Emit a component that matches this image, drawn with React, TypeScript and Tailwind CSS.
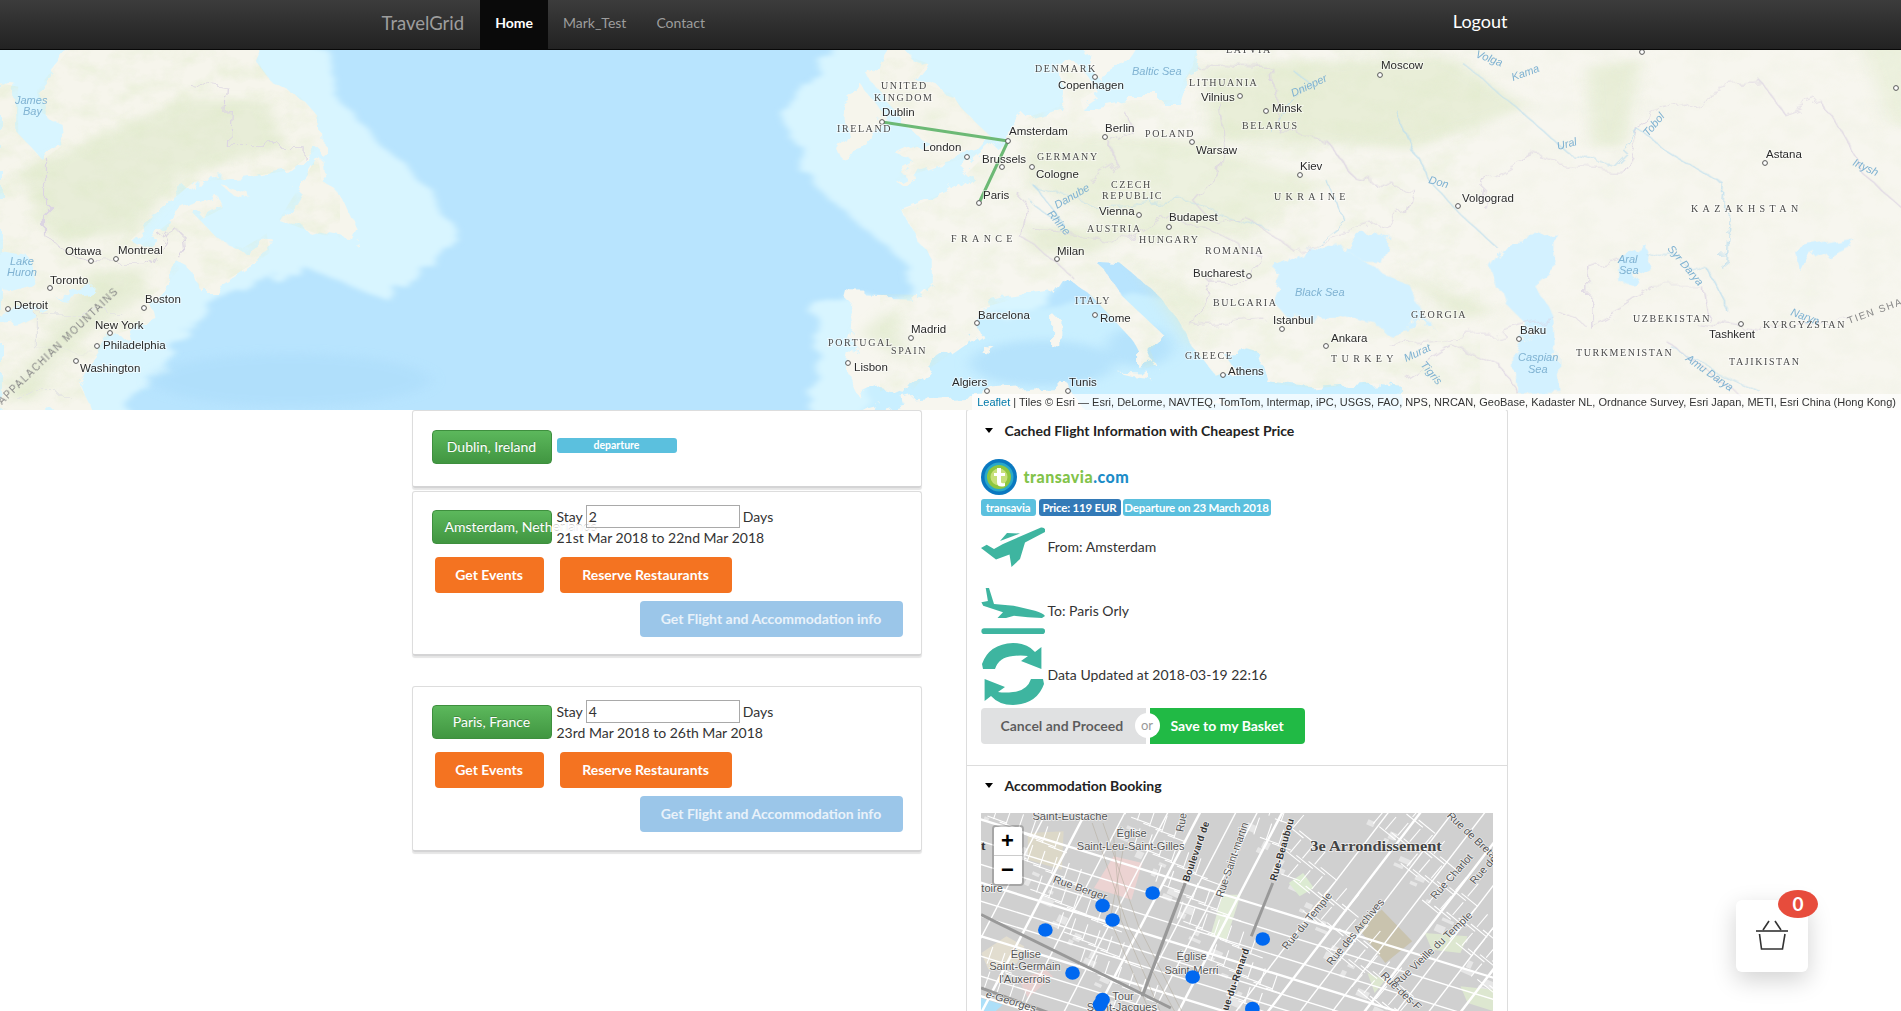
import type { ReactNode } from "react";

type Kind = "city" | "country" | "wide" | "water" | "range";
type Label = [string, number, number, Kind, number?];

const labels: Label[] = [
  ["Ottawa", 65, 255, "city"], ["Montreal", 118, 254, "city"], ["Toronto", 50, 284, "city"], ["Detroit", 14, 309, "city"],
  ["Boston", 145, 303, "city"], ["New York", 95, 329, "city"], ["Philadelphia", 103, 349, "city"], ["Washington", 80, 372, "city"],
  ["James", 15, 104, "water"], ["Bay", 23, 115, "water"], ["Lake", 10, 265, "water"], ["Huron", 7, 276, "water"],
  ["APPALACHIAN MOUNTAINS", 2, 405, "range", -44],
  ["UNITED", 881, 89, "country"], ["KINGDOM", 874, 101, "country"], ["Dublin", 882, 116, "city"], ["IRELAND", 837, 132, "country"],
  ["London", 923, 151, "city"], ["PORTUGAL", 828, 346, "country"], ["SPAIN", 891, 354, "country"], ["Madrid", 911, 333, "city"], ["Lisbon", 854, 371, "city"],
  ["LATVIA", 1226, 53, "country"], ["DENMARK", 1035, 72, "country"], ["Copenhagen", 1058, 89, "city"], ["Baltic Sea", 1132, 75, "water"],
  ["LITHUANIA", 1189, 86, "country"], ["Vilnius", 1201, 101, "city"], ["Minsk", 1272, 112, "city"], ["Dnieper", 1293, 97, "water", -25],
  ["Moscow", 1381, 69, "city"], ["Volga", 1475, 57, "water", 20], ["Kama", 1513, 81, "water", -20], ["Amsterdam", 1009, 135, "city"],
  ["Berlin", 1105, 132, "city"], ["POLAND", 1145, 137, "country"], ["BELARUS", 1242, 129, "country"], ["Warsaw", 1196, 154, "city"],
  ["Brussels", 982, 163, "city"], ["GERMANY", 1037, 160, "country"], ["Cologne", 1036, 178, "city"], ["Kiev", 1300, 170, "city"],
  ["CZECH", 1111, 188, "country"], ["REPUBLIC", 1102, 199, "country"], ["Paris", 983, 199, "city"], ["UKRAINE", 1274, 200, "wide"],
  ["Vienna", 1099, 215, "city"], ["Budapest", 1169, 221, "city"], ["Danube", 1057, 209, "water", -30], ["Rhine", 1047, 214, "water", 50],
  ["AUSTRIA", 1087, 232, "country"], ["HUNGARY", 1139, 243, "country"], ["FRANCE", 951, 242, "wide"], ["Milan", 1057, 255, "city"],
  ["ROMANIA", 1205, 254, "country"], ["Volgograd", 1462, 202, "city"], ["KAZAKHSTAN", 1691, 212, "wide"], ["Astana", 1766, 158, "city"],
  ["Ural", 1558, 150, "water", -15], ["Tobol", 1648, 137, "water", -50], ["Don", 1428, 183, "water", 15], ["Irtysh", 1852, 165, "water", 25],
  ["Bucharest", 1193, 277, "city"], ["ITALY", 1075, 304, "country"], ["BULGARIA", 1213, 306, "country"], ["Black Sea", 1295, 296, "water"],
  ["Rome", 1100, 322, "city"], ["Barcelona", 978, 319, "city"], ["GEORGIA", 1411, 318, "country"], ["Istanbul", 1273, 324, "city"],
  ["Baku", 1520, 334, "city"], ["UZBEKISTAN", 1633, 322, "country"], ["Tashkent", 1709, 338, "city"], ["KYRGYZSTAN", 1763, 328, "country"],
  ["Ankara", 1331, 342, "city"], ["TURKEY", 1331, 362, "wide"], ["TURKMENISTAN", 1576, 356, "country"], ["TAJIKISTAN", 1729, 365, "country"],
  ["Caspian", 1518, 361, "water"], ["Sea", 1528, 373, "water"], ["GREECE", 1185, 359, "country"], ["Athens", 1228, 375, "city"],
  ["Algiers", 952, 386, "city"], ["Tunis", 1069, 386, "city"], ["Tigris", 1420, 365, "water", 50], ["Murat", 1406, 362, "water", -25],
  ["Aral", 1618, 263, "water"], ["Sea", 1619, 274, "water"], ["Syr Darya", 1667, 249, "water", 50], ["Amu Darya", 1685, 360, "water", 35],
  ["Naryn", 1790, 315, "water", 20], ["TIEN SHAN", 1849, 324, "range", -20],
];

const cities = [
  [91, 261], [116, 259], [50, 288], [8, 309], [144, 308], [110, 333], [97, 346], [76, 361], [882, 122], [967, 157], [911, 338], [848, 363],
  [1095, 77], [1240, 96], [1266, 111], [1380, 75], [1642, 52], [1896, 88], [1008, 141], [1105, 137], [1192, 142], [1002, 167], [1032, 167],
  [1300, 175], [979, 203], [1139, 215], [1169, 227], [1057, 259], [1249, 276], [1095, 315], [977, 323], [1458, 206], [1765, 163], [1282, 329],
  [1326, 346], [1519, 339], [1741, 324], [1223, 375], [987, 391], [1068, 391],
];

const labelClass: Record<Kind, string> = {
  city: "fill-[#2a2a2a] text-[11.5px] [font-family:'Liberation_Sans',sans-serif] [paint-order:stroke] stroke-white/50 stroke-[2px]",
  country: "fill-[#4a4a4a] text-[10px] tracking-[1.6px] [font-family:'Liberation_Serif',serif] [paint-order:stroke] stroke-white/50 stroke-[2px]",
  wide: "fill-[#4a4a4a] text-[10px] tracking-[4.4px] [font-family:'Liberation_Serif',serif] [paint-order:stroke] stroke-white/50 stroke-[2px]",
  water: "fill-[#7fb2d2] text-[11px] italic [font-family:'Liberation_Sans',sans-serif]",
  range: "fill-[#888] text-[10px] tracking-[1.5px] [font-family:'Liberation_Sans',sans-serif]",
};

const americaLand =
  "M135 100 L415 100 L430 200 L450 250 L495 290 L525 350 L528 440 L480 510 L400 535 L320 545 L290 590 L265 630 L240 680 L215 720 L230 740 L270 680 L300 640 L360 590 L368 625 L330 660 L350 700 L365 720 L400 745 L440 700 L445 760 L400 810 L350 870 L330 870 L320 820 L300 800 L270 860 L240 900 L260 960 L220 985 L180 1010 L165 1050 L150 1090 L130 1150 L155 1240 L0 1240 L0 250 L30 260 L30 400 L70 480 L100 440 L95 360 L70 340 L60 270 Z";
const newfoundland = "M525 465 L500 540 L480 600 L460 660 L490 680 L520 700 L575 720 L585 680 L560 580 L530 540Z";
const ireland = "M1385 320 L1425 260 L1450 320 L1460 345 L1455 400 L1430 450 L1385 470 L1378 440 L1395 390 L1385 350Z";
const britain = "M1465 147 L1530 190 L1510 240 L1568 280 L1600 350 L1640 420 L1620 460 L1560 490 L1480 540 L1470 530 L1510 490 L1480 465 L1530 420 L1490 380 L1480 340 L1460 300 L1440 240 L1450 190Z";
const eurasia =
  "M410 100 L1700 100 L1700 1300 L745 1300 L745 1160 L700 1150 L600 1165 L525 1150 L510 1060 L480 1045 L445 1050 L470 1110 L440 1130 L410 1060 L385 980 L340 880 L280 790 L240 785 L255 810 L285 890 L355 1010 L330 1050 L340 1095 L315 1110 L315 1060 L290 1000 L240 900 L190 825 L170 880 L100 900 L50 925 L40 960 L50 1000 L-30 1100 L-70 1190 L-110 1170 L-145 1200 L-170 1100 L-155 1000 L-165 915 L-160 880 L-50 885 L-30 850 L-30 780 L-80 630 L-48 610 L0 570 L50 480 L95 410 L130 350 L180 320 L190 260 L180 200 L215 200 L240 270 L215 300 L220 330 L300 300 L375 300 L385 240 L400 200Z";

function WorldMap() {
  return (
    <svg className="block h-full w-full" viewBox="0 50 1901 360" preserveAspectRatio="none">
      <defs>
        <filter id="soft" x="-20%" y="-20%" width="140%" height="140%">
          <feGaussianBlur stdDeviation="12" />
        </filter>
        <filter id="softer" x="-10%" y="-10%" width="120%" height="120%">
          <feTurbulence type="fractalNoise" baseFrequency="0.02" numOctaves="3" seed="4" result="n" />
          <feDisplacementMap in="SourceGraphic" in2="n" scale="55" result="d" />
          <feGaussianBlur in="d" stdDeviation="6" />
        </filter>
        <filter id="rough" x="-5%" y="-5%" width="110%" height="110%">
          <feTurbulence type="fractalNoise" baseFrequency="0.035" numOctaves="4" seed="7" result="n" />
          <feDisplacementMap in="SourceGraphic" in2="n" scale="26" />
        </filter>
        <filter id="mottle" x="0" y="0" width="100%" height="100%">
          <feTurbulence type="fractalNoise" baseFrequency="0.035 0.05" numOctaves="4" seed="11" />
          <feColorMatrix values="0 0 0 0 0.72  0 0 0 0 0.82  0 0 0 0 0.56  1.6 0 0 0 -0.62" />
        </filter>
        <clipPath id="landClip">
          <path d={americaLand} transform="scale(0.6062 0.3333)" />
          <path d={newfoundland} transform="scale(0.6062 0.3333)" />
          <path d={eurasia} transform="translate(950 0) scale(0.6065 0.3333)" />
          <path d={britain} transform="scale(0.6062 0.3333)" />
          <path d={ireland} transform="scale(0.6062 0.3333)" />
        </clipPath>
      </defs>
      <rect x="0" y="50" width="1901" height="360" fill="#b8e4fe" />
      {/* shelf seas, drawn in crop coordinates */}
      <g transform="scale(0.6062 0.3333)" fill="#d8f5ff" filter="url(#softer)">
        <path d="M430 100 L540 147 L560 300 L700 560 L760 700 L640 900 L500 800 L350 900 L200 1260 L-20 1260 L-20 100Z" />
        <path d="M1400 100 L1290 340 L1340 550 L1500 800 L1500 880 L1350 900 L1340 1260 L1600 1260 L1760 800 L1800 500 L1800 100Z" />
        <path d="M1750 100 L2000 100 L2000 500 L1750 500Z" />
        <path d="M1420 1000 L2350 780 L2350 1260 L1420 1260Z" fill="#c9efff" />
      </g>
      <g transform="scale(0.6062 0.3333)" fill="#aedefb" filter="url(#soft)" opacity="0.7">
        <ellipse cx="480" cy="1140" rx="230" ry="80" />
        <ellipse cx="1720" cy="1090" rx="120" ry="70" />
        <ellipse cx="1880" cy="1040" rx="55" ry="60" />
      </g>
      <g filter="url(#rough)">
        <g transform="scale(0.6062 0.3333)" fill="#f6f5ec">
          <path d={americaLand} />
          <path d={newfoundland} />
          <path d="M365 555 L410 580 L412 598 L385 585Z" />
          <path d={ireland} />
          <path d={britain} />
        </g>
        <g transform="translate(950 0) scale(0.6065 0.3333)" fill="#f7f6ef">
          <path d={eurasia} />
          <path d="M240 100 L320 100 L300 160 L280 210 L245 235 L225 190Z" />
          <path d="M-200 1300 L-130 1230 L-60 1195 L60 1180 L200 1160 L210 1200 L240 1300Z" />
          <path d="M165 950 L182 955 L182 1040 L165 1035Z M275 1115 L328 1118 L328 1132 L298 1125Z M420 1207 L500 1212 L495 1220 L420 1214Z M55 1040 L75 1045 L65 1056 L50 1052Z" />
        </g>
      </g>
      <g transform="scale(0.6062 0.3333)" fill="#dde8c8" filter="url(#soft)" opacity="0.55">
        <path d="M30 520 L300 300 L440 300 L470 440 L300 520 L220 700 L90 720Z" />
        <path d="M150 820 L240 800 L230 900 L100 1050 L60 1200 L10 1200Z" />
        <path d="M1420 1000 L1470 920 L1500 1100Z" />
      </g>
      <g transform="translate(950 0) scale(0.6065 0.3333)" fill="#dfe9c9" filter="url(#soft)" opacity="0.6">
        <path d="M420 200 L820 170 L950 320 L760 450 L630 430 L430 420Z" />
        <path d="M1050 200 L1140 180 L1110 440 L1060 440Z" />
        <path d="M130 400 L420 420 L600 550 L510 700 L330 720 L120 540Z" opacity="0.7" />
        <path d="M130 680 L300 690 L240 760 L130 760Z" />
        <path d="M720 800 L900 930 L850 960Z" />
        <path d="M1500 130 L1700 120 L1700 350 L1550 380Z" opacity="0.7" />
        <path d="M300 780 L430 900 L400 1050Z" opacity="0.7" />
      </g>
      <g clipPath="url(#landClip)">
        <rect x="0" y="50" width="340" height="360" filter="url(#mottle)" opacity="0.5" />
        <rect x="880" y="50" width="600" height="360" filter="url(#mottle)" opacity="0.4" />
        <rect x="1480" y="50" width="421" height="360" filter="url(#mottle)" opacity="0.15" />
      </g>
      <g filter="url(#rough)">
        <g transform="scale(0.6062 0.3333)">
          <path fill="#d9f5ff" d="M0 750 L45 765 L60 860 L20 880 L0 860Z" />
          <path fill="#d9f5ff" d="M85 880 L150 850 L145 880 L100 890Z" />
          <path fill="#d9f5ff" d="M0 950 L80 925 L30 970 L0 975Z" />
          <g fill="none" stroke="#dcd5e2" strokeWidth="2">
            <path d="M80 480 V720 L150 790 L240 795 L270 690 L300 700 L305 790" />
            <path d="M310 250 L380 270 L375 440 L500 440 L500 470" />
            <path d="M60 940 H200 M60 940 V1050 H150 M20 1180 H110" stroke="#e4e4e4" />
          </g>
        </g>
        <g transform="translate(950 0) scale(0.6065 0.3333)">
          <g fill="#d3f1ff">
            <path d="M580 730 L650 750 L700 800 L760 860 L790 970 L720 990 L640 950 L560 960 L530 900 L550 810Z" />
            <path d="M650 750 L720 695 L705 780 L680 780Z" />
            <path d="M920 720 L1000 700 L1000 790 L960 850 L1000 960 L1005 1170 L930 1170 L930 1060 L960 990 L910 900 L890 800Z" />
            <path d="M1100 770 L1140 720 L1150 790 L1130 860 L1100 840Z" />
            <path d="M1390 750 L1490 715 L1480 740 L1400 810Z" />
          </g>
          <g fill="none" stroke="#dbd2e2" strokeWidth="2">
            <path d="M235 550 L280 500 L260 420 L290 380 L285 330 M440 300 L450 430 L440 520 L400 600 L430 660 L480 640 L560 740 L620 720 L750 640 L760 560 L660 520 L620 420 L540 390 L530 200 L400 190" />
            <path d="M140 690 L300 720 L360 650 L430 690 L520 780 L490 850 L430 850 L400 980 L520 960 M120 590 L110 700 L190 810" />
            <path d="M880 620 L890 540 L960 470 L1030 500 L1110 510 L1130 450 L1150 330 L1280 260 L1340 250 L1380 350 L1440 310 L1510 530 L1568 620" />
            <path d="M1055 980 V800 L1100 770 M1055 975 L1110 920 L1160 860 L1240 860 L1250 960 M1000 930 L1045 970 M1230 970 L1340 1000 L1480 950 M720 1030 L900 1010 L1000 960 M1190 1040 L1300 1180" />
            <path d="M750 1130 L830 1040 L910 1100 L930 1170" />
          </g>
          <g fill="none" stroke="#bcdeef" strokeWidth="2">
            <path d="M520 380 L600 260 L560 200 M620 540 L650 660 L600 730 M840 180 L920 300 L1020 460 L1090 490 L1140 400 L1280 560 L1270 800 M730 320 L760 450 L800 560 L840 640 L900 740" />
            <path d="M130 600 L190 680 L140 560 L240 620 L380 600 L520 680 M1140 750 L1250 810 L1290 950 M1200 1060 L1340 1180" />
          </g>
        </g>
      </g>
      <polyline points="882,122 1008,141 979,203" fill="none" stroke="#6cb975" strokeWidth="3" strokeLinejoin="round" />
      {cities.map(([x, y], i) => (
        <circle key={i} cx={x} cy={y} r="2.4" fill="#fff" stroke="#555" strokeWidth="1" />
      ))}
      {labels.map(([text, x, y, kind, rot], i) => (
        <text key={i} x={x} y={y} className={labelClass[kind]} transform={rot ? `rotate(${rot} ${x} ${y})` : undefined}>
          {text}
        </text>
      ))}
    </svg>
  );
}

// small side streets, spread with a fixed sequence so the picture stays the same
const alleys = Array.from({ length: 260 }, (_, i) => {
  const x = 60 + ((i * 137) % 1430);
  const y = 160 + ((i * 229) % 600);
  const steep = i % 2 === 0;
  const right = x > 900;
  const dx = steep ? (right ? 30 : 16) : right ? 46 : 52;
  const dy = steep ? (right ? -38 : -50) : right ? 40 : 20;
  return { x, y, dx, dy };
});

const roofs = Array.from({ length: 70 }, (_, i) => ({
  x: 70 + ((i * 191) % 1410),
  y: 170 + ((i * 313) % 580),
  w: 14 + (i % 4) * 7,
  h: 10 + (i % 3) * 6,
}));

function ParisMap() {
  const lineA = [150, 215, 285, 340, 395, 440, 500, 560, 620, 680, 740, 800, 865, 930, 1000];
  const lineB = [130, 240, 350, 470, 560, 660, 720, 790];
  const lineC = [900, 990, 1080, 1170, 1260, 1350, 1440, 1530, 1620, 1710];
  const dots = [[539, 400], [399, 438], [427, 481], [239, 511], [847, 538], [315, 640], [651, 652], [399, 720], [392, 735], [818, 747]];
  const text = "[font-family:'Liberation_Sans',sans-serif] text-[31px] fill-[#555] [paint-order:stroke] stroke-white/70 stroke-[4px]";
  const strong = "fill-[#333] text-[28px] font-bold tracking-[1px] [font-family:'Liberation_Sans',sans-serif] [paint-order:stroke] stroke-white/70 stroke-[4px]";
  return (
    <svg className="block h-full w-full" viewBox="59 160 1432 594" preserveAspectRatio="none">
      <rect x="59" y="160" width="1432" height="594" fill="#d0d0d0" />
      {roofs.map((r, i) => (
        <rect key={i} x={r.x} y={r.y} width={r.w} height={r.h} fill="#e6e6e6" transform={`rotate(25 ${r.x} ${r.y})`} />
      ))}
      <path d="M190 220 L290 215 L285 330 L190 300Z" fill="#dcd8c8" />
      <path d="M375 385 L430 290 L510 310 L480 420 L420 400Z" fill="#ecd3d2" />
      <path d="M700 530 L735 405 L785 405 L745 540Z" fill="#e2ecd8" />
      <path d="M920 370 L960 340 L990 385 L950 410Z" fill="#dcebd2" />
      <path d="M1110 500 L1180 450 L1265 545 L1190 610Z" fill="#c9c3ae" />
      <path d="M59 715 L120 735 L100 754 L59 754Z" fill="#addff8" />
      <path d="M165 660 L240 630 L260 650 L190 715Z" fill="#e6cfcf" />
      <path d="M60 580 L130 530 L180 560 L160 610 L80 630Z" fill="#e2ddcf" />
      <path d="M1300 520 L1420 530 L1400 580 L1320 570Z M1140 640 L1190 660 L1160 700Z M1400 680 L1491 690 L1491 754 L1420 730Z" fill="#dde7d0" />
      <g stroke="#fff" fill="none">
        {lineA.map((y0, i) => (
          <line key={i} x1="0" y1={y0 + 10} x2="1600" y2={y0 + 540} strokeWidth={i % 3 === 0 ? 7 : 4} />
        ))}
        {lineB.map((x0, i) => (
          <line key={i} x1={x0 + 140} y1="100" x2={x0 - 200} y2="800" strokeWidth={i % 3 === 1 ? 7 : 4} />
        ))}
        {lineC.map((x0, i) => (
          <line key={i} x1={x0 + 340} y1="100" x2={x0 - 160} y2="800" strokeWidth={i % 3 === 1 ? 7 : 4} />
        ))}
        {alleys.map((a, i) => (
          <line key={i} x1={a.x} y1={a.y} x2={a.x + a.dx} y2={a.y + a.dy} strokeWidth="3" />
        ))}
      </g>
      <g stroke="#b5ad9e" strokeWidth="2" fill="none" opacity="0.8">
        <path d="M370 190 L470 500 L600 754 M400 190 L500 500 L620 754 M430 230 L450 480 L560 754 M460 250 L420 480 L530 754" />
      </g>
      <g stroke="#999" fill="none">
        <path d="M59 465 L590 745" strokeWidth="9" />
        <path d="M59 685 L250 760" strokeWidth="9" />
        <path d="M630 370 L510 710" strokeWidth="9" />
        <path d="M875 370 L815 530" strokeWidth="8" />
      </g>
      <text x="203" y="182" className={text}>Saint-Eustache</text>
      <text x="438" y="232" className={text}>Église</text>
      <text x="327" y="270" className={text}>Saint-Leu-Saint-Gilles</text>
      <text x="59" y="272" className="fill-[#333] text-[38px] font-bold [font-family:'Liberation_Serif',serif]">t</text>
      <text x="60" y="398" className={text}>toire</text>
      <text x="258" y="368" transform="rotate(20 258 368)" className={text}>Rue Berger</text>
      <text x="640" y="368" transform="rotate(-72 640 368)" className={strong}>Boulevard de</text>
      <text x="625" y="218" transform="rotate(-80 625 218)" className={text}>Rue</text>
      <text x="735" y="415" transform="rotate(-72 735 415)" className={text}>Rue-Saint-martin</text>
      <text x="885" y="365" transform="rotate(-75 885 365)" className={strong}>Rue-Beaubou</text>
      <text x="980" y="274" className="fill-[#444] text-[46px] font-bold [font-family:'Liberation_Serif',serif] [paint-order:stroke] stroke-white/70 stroke-[4px]">3e Arrondissement</text>
      <text x="915" y="572" transform="rotate(-52 915 572)" className={text}>Rue du Temple</text>
      <text x="1040" y="618" transform="rotate(-52 1040 618)" className={text}>Rue des Archives</text>
      <text x="1225" y="680" transform="rotate(-45 1225 680)" className={text}>Rue Vieille du Temple</text>
      <text x="1175" y="650" transform="rotate(45 1175 650)" className={text}>Rue-des-F</text>
      <text x="1330" y="420" transform="rotate(-50 1330 420)" className={text}>Rue Charlot</text>
      <text x="1360" y="170" transform="rotate(45 1360 170)" className={text}>Rue de Bretagne</text>
      <text x="1440" y="375" transform="rotate(-50 1440 375)" className={text}>Rue de</text>
      <text x="750" y="754" transform="rotate(-72 750 754)" className={strong}>ue-du-Renard</text>
      <text x="606" y="602" className={text}>Église</text>
      <text x="572" y="644" className={text}>Saint-Merri</text>
      <text x="142" y="596" className={text}>Église</text>
      <text x="82" y="632" className={text}>Saint-Germain</text>
      <text x="110" y="670" className={text}>l'Auxerrois</text>
      <text x="426" y="722" className={text}>Tour</text>
      <text x="355" y="754" className={text}>Saint-Jacques</text>
      <text x="70" y="712" transform="rotate(18 70 712)" className={text}>e-Georges</text>
      {dots.map(([x, y], i) => (
        <circle key={i} cx={x} cy={y} r="20.5" fill="#0068f0" />
      ))}
    </svg>
  );
}

function Plane() {
  return (
    <svg className="h-16 w-16 shrink-0 fill-[#3eb5a0]" viewBox="0 0 64 64">
      <path d="M60 13.5 Q65 13 64 18 L44 28.5 L39 45 L30.5 53 L28.5 40.5 L15 45.5 L0 34 L5.7 30.7 L13 35 L22 30Z" />
      <path d="M19 27 L26 19 L39 19.5Z" />
    </svg>
  );
}

function PlaneLand() {
  return (
    <svg className="h-16 w-16 shrink-0 fill-[#3eb5a0]" viewBox="0 0 64 64">
      <path d="M4.7 10 L8 10 L13 26 L32.6 27.7 L54 32.7 Q62 35 64 38 L61 40 L47 39.3 L33 37.7 L25 40 L16.5 40 L22 34.3 L2.2 27.7 L0.4 24.3 L6.9 23Z" />
      <rect x="0.4" y="50.3" width="63.6" height="5.7" rx="2.8" />
    </svg>
  );
}

function SyncIcon() {
  const arc = "M1 22 Q8 2 32 1 Q46 1 54 10 L60.4 5 L60.4 27 L40 19 L47 14 Q40 13 32 14 Q18 15 14 27 L2 27Z";
  return (
    <svg className="h-16 w-16 shrink-0 fill-[#3eb5a0]" viewBox="0 0 64 64">
      <path d={arc} />
      <path d={arc} transform="rotate(180 32 32)" />
    </svg>
  );
}

function Caret() {
  return (
    <svg className="h-[5px] w-[8px] fill-black" viewBox="0 0 8 5">
      <path d="M0 0 H8 L4 5Z" />
    </svg>
  );
}

function CityButton({ name }: { name: string }) {
  return (
    <div className="h-[34px] w-[120px] shrink-0 whitespace-nowrap rounded-[4px] border border-[#3e8f3e] bg-gradient-to-b from-[#5cb85c] to-[#419641] px-3 text-center text-[14px] leading-[32px] text-white [text-shadow:0_-1px_0_rgba(0,0,0,0.2)]">
      {name}
    </div>
  );
}

function Stop({ name, days, dates, tall }: { name: string; days: string; dates: string; tall?: boolean }) {
  return (
    <div className={`rounded-[3px] border border-b-2 border-[#ddd] border-b-[#d4d4d5] pl-[19px] pr-[18px] pt-[18px] shadow-[0_2px_1px_rgba(0,0,0,0.1)] ${tall ? "pb-[18px]" : "pb-[17px]"}`}>
      <div className="flex items-start gap-[5px]">
        <CityButton name={name} />
        <div className="-mt-[5px] text-[14px] leading-[20px] text-[#333]">
          <div className="flex h-[23px] items-center">
            <span>Stay</span>
            <div className="ml-[3px] h-[23px] w-[154px] border border-[#a9a9a9] px-[2px] leading-[21px]">{days}</div>
            <span className="ml-[3px]">Days</span>
          </div>
          <div>{dates}</div>
        </div>
      </div>
      <div className="ml-[3px] mt-[9px] flex gap-[16px]">
        <div className="h-9 w-[109px] rounded-[4px] bg-[#f47321] text-center text-[14px] font-bold leading-9 text-white">Get Events</div>
        <div className="h-9 w-[172px] rounded-[4px] bg-[#f47321] text-center text-[14px] font-bold leading-9 text-white">Reserve Restaurants</div>
      </div>
      <div className="mt-2 flex justify-end">
        <div className="h-9 w-[263px] rounded-[4px] bg-[#9bc6e9] text-center text-[14px] font-bold leading-9 text-[#e9f2fa]">Get Flight and Accommodation info</div>
      </div>
    </div>
  );
}

function InfoRow({ icon, text }: { icon: ReactNode; text: string }) {
  return (
    <div className="flex h-16 items-center">
      {icon}
      <span className="ml-[3px] text-[14px] text-[#333]">{text}</span>
    </div>
  );
}

export default function App() {
  return (
    <div className="relative h-screen overflow-hidden bg-white [font-family:Lato,sans-serif]">
      <nav className="h-[50px] border-b border-[#080808] bg-gradient-to-b from-[#3c3c3c] to-[#222]">
        <div className="mx-auto flex h-[49px] w-[1170px] items-stretch">
          <a className="ml-[16px] mr-[16px] text-[18.5px] leading-[47px] text-[#9d9d9d]">TravelGrid</a>
          <a className="bg-[#0a0a0a] px-[15px] text-[14px] font-bold leading-[46px] text-white">Home</a>
          <a className="px-[15px] text-[14px] leading-[46px] text-[#9d9d9d]">Mark_Test</a>
          <a className="px-[15px] text-[14px] leading-[46px] text-[#9d9d9d]">Contact</a>
          <a className="ml-auto mr-[28px] text-[18px] leading-[42px] text-white">Logout</a>
        </div>
      </nav>

      <div className="relative h-[360px]">
        <WorldMap />
        <div className="absolute bottom-0 right-0 whitespace-nowrap bg-white/70 px-[5px] text-[11px] leading-[16px] text-[#333] [font-family:'Liberation_Sans',sans-serif]">
          <span className="text-[#0078a8]">Leaflet</span> | Tiles © Esri — Esri, DeLorme, NAVTEQ, TomTom, Intermap, iPC, USGS, FAO, NPS, NRCAN, GeoBase, Kadaster NL, Ordnance Survey, Esri Japan, METI, Esri China (Hong Kong)
        </div>
      </div>

      <div className="mx-auto flex w-[1170px] items-start pl-[46px]">
        <div className="w-[510px]">
          <div className="rounded-[3px] border border-b-2 border-[#ddd] border-b-[#d4d4d5] pb-[22px] pl-[19px] pt-[19px] shadow-[0_2px_1px_rgba(0,0,0,0.1)]">
            <div className="flex items-start gap-[5px]">
              <CityButton name="Dublin, Ireland" />
              <span className="mt-2 h-[15px] w-[120px] rounded-[3px] bg-[#5bc0de] text-center text-[10.5px] font-bold leading-[15px] text-white">departure</span>
            </div>
          </div>
          <div className="mt-[3px]">
            <Stop name="Amsterdam, Netherlands" days="2" dates="21st Mar 2018 to 22nd Mar 2018" />
          </div>
          <div className="mt-[30px]">
            <Stop name="Paris, France" days="4" dates="23rd Mar 2018 to 26th Mar 2018" tall />
          </div>
        </div>

        <div className="ml-[44px] -mt-px w-[542px] rounded-t-[3px] border border-b-0 border-[#ddd]">
          <div className="px-[14px] pb-[21px]">
            <div className="flex h-[41px] items-center gap-[10px] pl-[4px] text-[14px] font-bold text-[#222]">
              <Caret />
              <span className="ml-[2px]">Cached Flight Information with Cheapest Price</span>
            </div>
            <div className="mt-[8px] flex h-[36px] items-center">
              <svg className="h-9 w-9" viewBox="0 0 36 36">
                <circle cx="18" cy="18" r="18" fill="#0a78c0" />
                <circle cx="18" cy="18" r="14.5" fill="#29a9c9" />
                <circle cx="18" cy="18" r="12" fill="#8ec63f" />
                <circle cx="18" cy="18" r="8.5" fill="#c7e07a" />
                <path d="M16 9 L20 9 L20 14 L24 14 L24 17 L20 17 L20 23 Q20 25 24 24 L24 27 Q16 29 16 23 L16 17 L13 17 L13 14 L16 14Z" fill="#fff" />
              </svg>
              <span className="ml-[7px] text-[16px] font-black leading-none tracking-[0.5px] text-[#82c34a]">
                transavia<span className="text-[#1c8cc8]">.com</span>
              </span>
            </div>
            <div className="mt-[4px] flex h-[17px] whitespace-nowrap text-[11.5px] font-bold leading-[17px] tracking-[-0.2px] text-white">
              <span className="w-[55px] rounded-[3px] bg-[#5bc0de] text-center">transavia</span>
              <span className="ml-[3px] w-[82px] rounded-[3px] bg-[#337ab7] text-center">Price: 119 EUR</span>
              <span className="ml-[2px] w-[148px] rounded-[3px] bg-[#5bc0de] text-center">Departure on 23 March 2018</span>
            </div>
            <div className="-mt-[2px]">
              <InfoRow icon={<Plane />} text="From: Amsterdam" />
              <InfoRow icon={<PlaneLand />} text="To: Paris Orly" />
              <InfoRow icon={<SyncIcon />} text="Data Updated at 2018-03-19 22:16" />
            </div>
            <div className="relative mt-[2px] flex h-9 text-[14px] font-bold leading-9">
              <div className="w-[165px] rounded-l-[4px] bg-[#e0e1e2] pl-[20px] text-[#0009]">Cancel and Proceed</div>
              <div className="ml-[4px] w-[155px] rounded-r-[4px] bg-[#21ba45] pl-[21px] text-white">Save to my Basket</div>
              <div className="absolute left-[154px] top-[5px] h-[25px] w-[25px] rounded-full bg-white text-center text-[13px] font-normal leading-[25px] text-[#999]">or</div>
            </div>
          </div>
          <div className="border-t border-[#ddd] px-[14px]">
            <div className="flex h-[39px] items-center gap-[10px] pl-[4px] text-[14px] font-bold text-[#222]">
              <Caret />
              <span className="ml-[2px]">Accommodation Booking</span>
            </div>
            <div className="relative mt-[8px] h-[198px] w-[512px] overflow-hidden">
              <ParisMap />
              <div className="absolute left-[11px] top-[12px] w-[32px] rounded-[4px] border-2 border-black/20 bg-clip-padding">
                <div className="h-[29px] rounded-t-[2px] border-b border-[#ccc] bg-white text-center text-[22px] font-bold leading-[27px] text-black [font-family:'Liberation_Sans',sans-serif]">+</div>
                <div className="h-[28px] rounded-b-[2px] bg-white text-center text-[22px] font-bold leading-[27px] text-black [font-family:'Liberation_Sans',sans-serif]">−</div>
              </div>
            </div>
          </div>
        </div>
      </div>

      <div className="absolute left-[1736px] top-[900px] flex h-[72px] w-[72px] items-center justify-center rounded-[6px] bg-white shadow-[0_8px_24px_rgba(0,0,0,0.18)]">
        <svg className="h-[72px] w-[72px]" viewBox="0 0 72 72" fill="none" stroke="#333" strokeWidth="1.6">
          <path d="M20 31 H52" />
          <path d="M27 30 L33 21 M45 30 L39 21" />
          <path d="M23.5 34 L25.5 49 H46.5 L49 34" />
        </svg>
        <span className="absolute -right-[10px] -top-[10px] h-[28px] w-[40px] rounded-[50%] bg-[#e74c3c] text-center text-[19px] font-bold leading-[28px] text-white">0</span>
      </div>
    </div>
  );
}
